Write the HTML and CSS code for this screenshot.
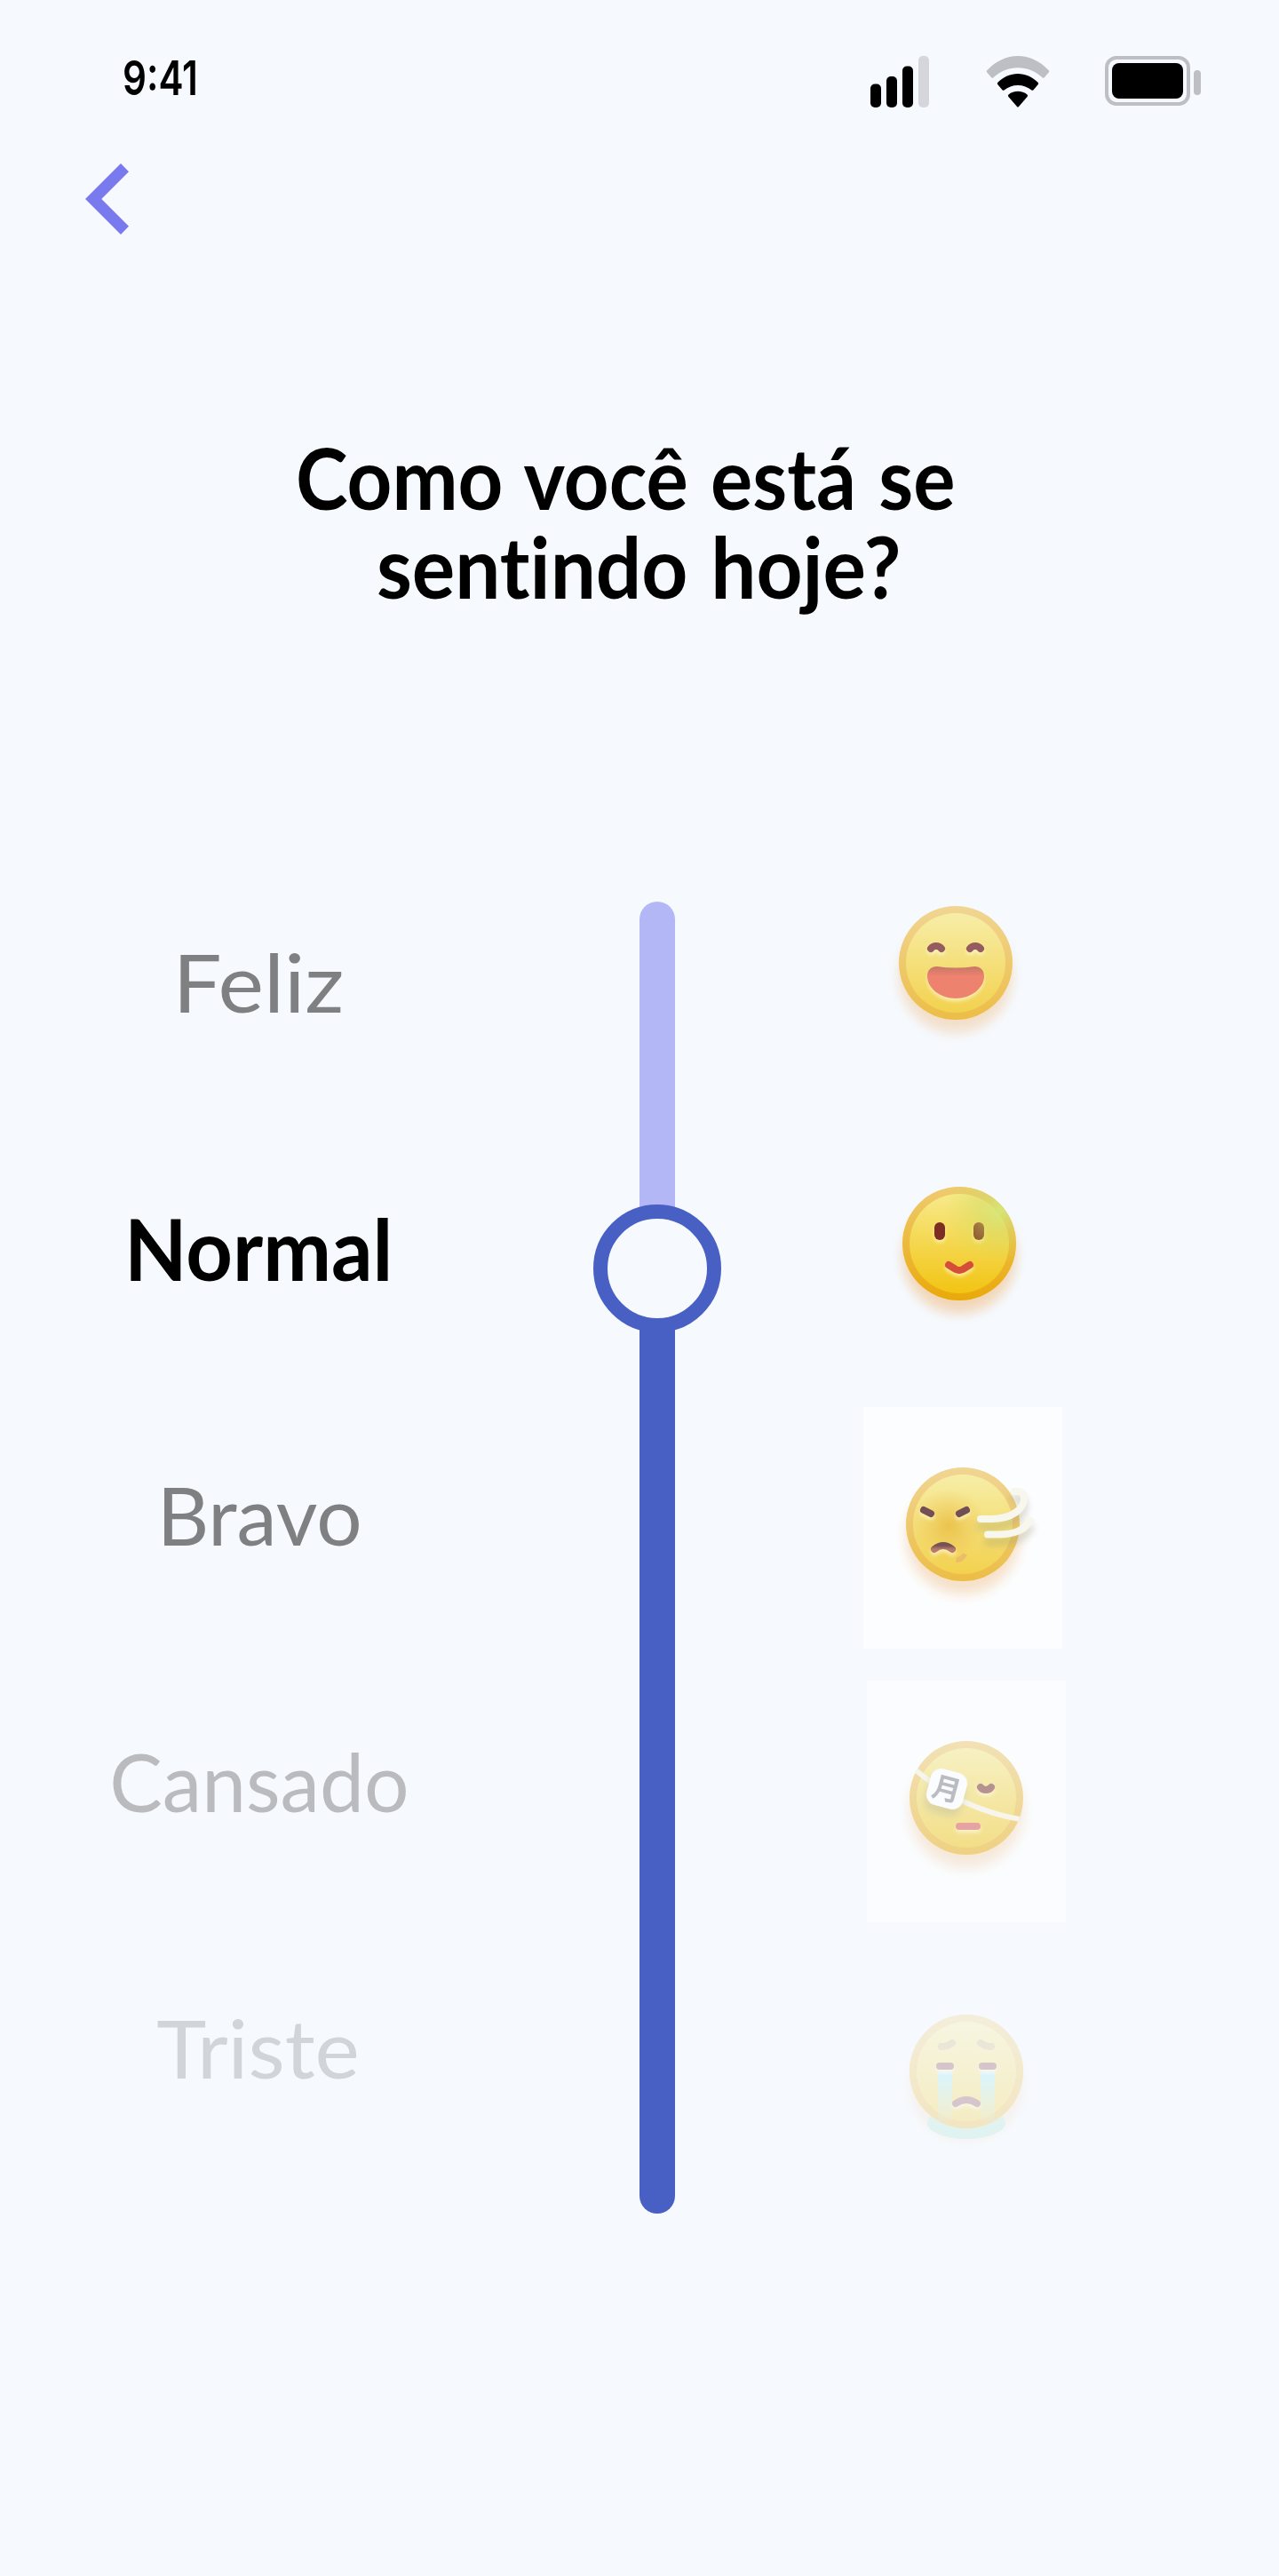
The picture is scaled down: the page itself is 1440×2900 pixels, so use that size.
FILE: index.html
```html
<!DOCTYPE html>
<html lang="pt-BR">
<head>
<meta charset="utf-8">
<title>Como você está se sentindo hoje?</title>
<link rel="stylesheet" href="styles.css">
</head>
<body>
<main class="screen">
  <header class="status">
    <span class="time">9:41</span>
    <div class="status-icons">
      <svg width="66" height="58" viewBox="0 0 66 58">
        <rect x="0" y="31.5" width="12" height="26.500" rx="5"/>
        <rect x="18" y="23" width="12" height="35" rx="5"/>
        <rect x="36" y="11.500" width="12" height="46.500" rx="5"/>
        <rect x="54" y="0" width="12" height="58" rx="5" fill="#d5d6db"/>
      </svg>
      <svg width="72" height="58" viewBox="0 0 72 58">
        <path d="M1 16.500C21-5.500 51-5.500 71 16.500Q71.500 17.500 71 18.200L65.800 24.200Q64.500 25.200 63.500 24.200C48 9.500 24 9.500 8.500 24.200Q7.500 25.200 6.200 24.200L1 18.200Q.5 17.500 1 16.500Z" fill="#bdbfc5"/>
        <path d="M13.200 30C26 16.500 46 16.500 58.800 30Q59.600 31 58.800 32L53.300 38.500Q52.300 39.200 51.500 38.500C43 31 29 31 20.500 38.500Q19.700 39.200 18.700 38.500L13.200 32Q12.400 31 13.200 30Z"/>
        <path d="M25.500 43.500C31 38.500 41 38.500 46.500 43.500Q47.500 44.700 46.500 46L37 57Q36 58.200 35 57L25.500 46Q24.500 44.700 25.500 43.500Z"/>
      </svg>
      <svg width="108" height="56" viewBox="0 0 108 56">
        <rect x="2" y="2" width="92" height="52" rx="11" fill="none" stroke="#bdbfc5" stroke-width="4"/>
        <rect x="8" y="8" width="80" height="40" rx="8"/>
        <rect x="100" y="16" width="8" height="28" rx="4" fill="#bdbfc5"/>
      </svg>
    </div>
  </header>

  <nav class="nav">
    <svg width="50" height="80" viewBox="0 0 50 80"><path d="M40 0L49 9.200L18.300 40L49 70.800L40 80L0 40Z" fill="#7a7aef"/></svg>
  </nav>

  <h1 class="title"><span class="line line-1">Como você está se</span><span class="line line-2">sentindo hoje?</span></h1>

  <section class="picker">
    <ul class="labels">
      <li class="label"><span class="word feliz">Feliz</span></li>
      <li class="label selected"><span class="word normal">Normal</span></li>
      <li class="label"><span class="word bravo">Bravo</span></li>
      <li class="label far"><span class="word cansado">Cansado</span></li>
      <li class="label farther"><span class="word triste">Triste</span></li>
    </ul>

    <div class="slider">
      <div class="track-top"></div>
      <div class="knob"></div>
      <div class="track-bottom"></div>
    </div>

    <div class="faces">
      <svg class="face feliz-face" viewBox="0 0 224 272">
        <defs>
          <linearGradient id="rim" x1="0" y1="0" x2="0" y2="1"><stop offset="0" stop-color="#efca70"/><stop offset="1" stop-color="#e9a908"/></linearGradient>
          <linearGradient id="skin" x1="0" y1="0" x2="0" y2="1"><stop offset="0" stop-color="#f7ea8b"/><stop offset="1" stop-color="#f2c413"/></linearGradient>
          <linearGradient id="mouth" x1="0" y1="0" x2="0" y2="1"><stop offset="0" stop-color="#b74c34"/><stop offset=".3" stop-color="#eb5a3f"/></linearGradient>
          <linearGradient id="frown" x1="0" y1="0" x2="0" y2="1"><stop offset="0" stop-color="#4c1a1a"/><stop offset="1" stop-color="#a34f3c"/></linearGradient>
          <linearGradient id="tear" x1="0" y1="0" x2="0" y2="1"><stop offset="0" stop-color="#d8f8ff"/><stop offset=".15" stop-color="#8be5ee"/><stop offset="1" stop-color="#a9e7c8" stop-opacity=".15"/></linearGradient>
          <radialGradient id="sheen"><stop offset="0" stop-color="#d3ea7a" stop-opacity=".9"/><stop offset=".4" stop-color="#d2dc68" stop-opacity=".5"/><stop offset="1" stop-color="#d8d850" stop-opacity="0"/></radialGradient>
          <radialGradient id="flush"><stop offset="0" stop-color="#e6ad0c" stop-opacity=".9"/><stop offset="1" stop-color="#eeb820" stop-opacity="0"/></radialGradient>
          <filter id="halo" x="-30%" y="-30%" width="160%" height="170%" color-interpolation-filters="sRGB"><feDropShadow dx="0" dy="15" stdDeviation="7" flood-color="#eba04c" flood-opacity=".4"/></filter>
          <filter id="glow" x="-50%" y="-50%" width="200%" height="250%" color-interpolation-filters="sRGB"><feDropShadow dx="0" dy="3" stdDeviation="2" flood-color="#fff3b0" flood-opacity=".85"/></filter>
          <filter id="shade" x="-50%" y="-50%" width="200%" height="220%" color-interpolation-filters="sRGB"><feDropShadow dx="0" dy="8" stdDeviation="4.500" flood-color="#6b6b40" flood-opacity=".36"/></filter>
          <clipPath id="disc"><circle cx="112" cy="132" r="64"/></clipPath>
        </defs>
        <circle cx="112" cy="132" r="64" fill="url(#rim)" filter="url(#halo)"/>
        <circle cx="112" cy="132" r="56" fill="url(#skin)"/>
        <g filter="url(#glow)">
          <path d="M84 116C87 112 93 112 96 116M128 116C131 112 137 112 140 116" fill="none" stroke="#74282a" stroke-width="8" stroke-linecap="round"/>
          <path d="M80 147C80 140 84 136 91 136Q112 139 133 136C140 136 144 140 144 147C144 160 130 172 112 172S80 160 80 147Z" fill="url(#mouth)"/>
        </g>
      </svg>

      <svg class="face normal-face" viewBox="0 0 224 272">
        <circle cx="112" cy="132" r="64" fill="url(#rim)" filter="url(#halo)"/>
        <circle cx="112" cy="132" r="56" fill="url(#skin)"/>
        <g filter="url(#glow)">
          <rect x="84" y="108" width="12" height="20" rx="6" fill="#7c2e23"/>
          <rect x="128" y="108" width="12" height="20" rx="6" fill="#7c2e23"/>
          <path d="M100 156L108 161Q112 163 116 161L124 156" fill="none" stroke="#d54e38" stroke-width="8" stroke-linecap="round"/>
        </g>
        <circle cx="158" cy="94" r="62" fill="url(#sheen)" clip-path="url(#disc)"/>
      </svg>

      <svg class="face bravo-face" viewBox="0 0 224 272">
        <rect width="224" height="272" fill="#fff"/>
        <circle cx="112" cy="132" r="64" fill="url(#rim)" filter="url(#halo)"/>
        <circle cx="112" cy="132" r="56" fill="url(#skin)"/>
        <circle cx="96" cy="134" r="42" fill="url(#flush)"/>
        <g filter="url(#glow)">
          <path d="M68 116L76 120M116 116L108 120" fill="none" stroke="#48171a" stroke-width="8" stroke-linecap="round"/>
          <path d="M80 160Q90 152 100 160" fill="none" stroke="url(#frown)" stroke-width="8" stroke-linecap="round"/>
        </g>
        <path d="M104 175L105 169Q109 169 112 164.500L117 166.500Q112 176 104 175Z" fill="#e9a935"/>
        <g filter="url(#shade)" fill="none" stroke="#f9f6e9" stroke-width="8" stroke-linecap="round">
          <path d="M132 126H144C168 126 181 114 181 103C181 98 178 95 173 95H170"/>
          <path d="M140 143.500H152C170 143.500 182 138 188 128"/>
        </g>
      </svg>

      <svg class="face cansado-face" viewBox="0 0 224 272">
        <rect width="224" height="272" fill="#fff"/>
        <circle cx="112" cy="132" r="64" fill="url(#rim)" filter="url(#halo)"/>
        <circle cx="112" cy="132" r="56" fill="url(#skin)"/>
        <path d="M54 100C82 124 124 149 178 157" fill="none" stroke="#f8f2dc" stroke-width="6" clip-path="url(#disc)"/>
        <g filter="url(#glow)">
          <path d="M128 120C131 124 137 124 140 120" fill="none" stroke="#782a28" stroke-width="8" stroke-linecap="round"/>
          <rect x="100" y="160" width="28" height="8" rx="4" fill="#d55146"/>
        </g>
        <g transform="rotate(15 90 122)">
          <rect x="69" y="101" width="42" height="42" rx="12" fill="#fff" filter="url(#shade)"/>
          <text class="patch" x="90" y="133.500" text-anchor="middle">月</text>
        </g>
      </svg>

      <svg class="face triste-face" viewBox="0 0 224 272">
        <circle cx="112" cy="132" r="64" fill="url(#rim)" filter="url(#halo)"/>
        <ellipse cx="112" cy="190" rx="44" ry="18" fill="#a0e0cb"/>
        <circle cx="112" cy="132" r="64" fill="url(#rim)"/>
        <circle cx="112" cy="132" r="56" fill="url(#skin)"/>
        <path d="M84 104Q91 104 96 100M128 100Q133 104 140 104" fill="none" stroke="#cdae66" stroke-width="8" stroke-linecap="round"/>
        <g clip-path="url(#disc)" fill="url(#tear)">
          <rect x="80" y="128" width="16" height="60"/>
          <rect x="128" y="128" width="16" height="60"/>
        </g>
        <g filter="url(#glow)">
          <rect x="78" y="122" width="20" height="8" rx="4" fill="#752a35"/>
          <rect x="126" y="122" width="20" height="8" rx="4" fill="#752a35"/>
          <path d="M100 168Q112 160 124 168" fill="none" stroke="#782c36" stroke-width="8" stroke-linecap="round"/>
        </g>
      </svg>
    </div>
  </section>
</main>
</body>
</html>
```

FILE: styles.css
```css
* { box-sizing: border-box; }
body { margin: 0; background: #f6faff; color: #000; font-family: Lato, "Noto Sans", sans-serif; font-variant-ligatures: none; }
.screen { width: 1440px; height: 2900px; overflow: hidden; background: #f6faff; display: flex; flex-direction: column; }
svg { display: block; flex: none; }

.status { height: 121px; padding: 63px 88px 0 138px; display: flex; justify-content: space-between; align-items: flex-start; }
.time { font: 600 53px/50px Inter, sans-serif; transform: scaleX(.795); transform-origin: left center; }
.status-icons { display: flex; align-items: flex-start; }
.status-icons svg + svg { margin-left: 62px; }
.status-icons svg:first-child { margin-right: 2px; }

.nav { padding: 63px 0 0 96px; }

.title { margin: 223px 0 0; font-size: 96px; line-height: 100px; font-weight: 700; display: flex; flex-direction: column; }
.line { white-space: nowrap; width: max-content; transform-origin: left center; word-spacing: 4px; }
.line-1 { margin-left: 333px; transform: scaleX(.922); }
.line-2 { margin-left: 424px; transform: scaleX(.945); }

.picker { margin-top: 265px; display: flex; align-items: flex-start; }
.labels { list-style: none; margin: 53px 0 0; padding: 0; width: 584px; }
.label { height: 300px; display: flex; justify-content: center; font-size: 92px; line-height: 200px; color: #7f8082; }
.label.selected { font-size: 96px; font-weight: 700; color: #000; }
.label.far { color: #babbbf; }
.label.farther { color: #d1d4d9; }
.feliz { margin-right: 3px; transform: scaleX(1.06); }
.normal { margin-right: 2px; transform: scaleX(.955); }
.bravo { transform: scaleX(.985); }
.cansado { transform: scaleX(.97); }
.triste { margin-right: 3px; transform: scaleX(1.035); }

.slider { width: 144px; margin: 63px 0 0 84px; display: flex; flex-direction: column; align-items: center; }
.track-top { width: 40px; height: 361px; border-radius: 20px 20px 0 0; background: #b3b7f6; margin-bottom: -20px; }
.knob { position: relative; width: 144px; height: 144px; border: 16px solid #485fc4; border-radius: 50%; background: #f6faff; }
.track-bottom { width: 40px; height: 1000px; margin-top: -8px; border-radius: 0 0 20px 20px; background: #485fc4; }

.faces { margin-left: 152px; }
.face { width: 224px; height: 272px; margin-bottom: 44px; }
.feliz-face { opacity: .75; }
.normal-face { margin-left: 4px; }
.bravo-face { margin: 0 0 36px 8px; opacity: .75; }
.cansado-face { margin: 0 0 36px 12px; opacity: .5; }
.triste-face { margin: 0 0 0 12px; opacity: .25; }
.patch { font: 700 32px "Noto Sans CJK JP", sans-serif; fill: #7e8082; }
```
